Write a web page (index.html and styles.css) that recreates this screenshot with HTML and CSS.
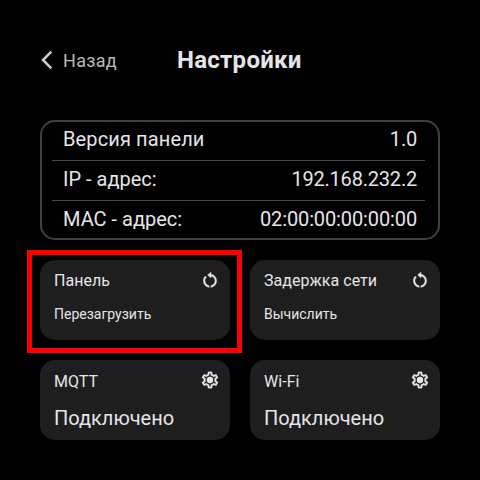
FILE: index.html
```html
<!DOCTYPE html>
<html lang="ru">
<head>
<meta charset="utf-8">
<title>Настройки</title>
<link rel="stylesheet" href="styles.css">
</head>
<body>
<svg class="defs" width="0" height="0" aria-hidden="true">
  <symbol id="restart" viewBox="0 0 24 24"><path d="M13.300 5V2.300L9 6l4.300 3.700V7.100C16 7.700 18 10.100 18 13c0 2.970-2.170 5.430-5 5.910v2.020c3.950-.49 7-3.850 7-7.930 0-4-2.900-7.400-6.700-8zM6 13c0-1.650.67-3.150 1.760-4.240L6.340 7.340C4.900 8.790 4 10.790 4 13c0 4.080 3.050 7.440 7 7.930v-2.020c-2.830-.48-5-2.940-5-5.910z"/></symbol>
  <symbol id="gear" viewBox="0 0 24 24"><path d="M19.43 12.98c.04-.32.07-.64.07-.98 0-.34-.03-.66-.07-.98l2.11-1.65c.19-.15.24-.42.12-.64l-2-3.46c-.09-.16-.26-.25-.44-.25-.06 0-.12.01-.17.03l-2.49 1c-.52-.4-1.08-.73-1.69-.98l-.38-2.65C14.46 2.18 14.25 2 14 2h-4c-.25 0-.46.18-.49.42l-.38 2.65c-.61.25-1.17.59-1.69.98l-2.49-1c-.06-.02-.12-.03-.18-.03-.17 0-.34.09-.43.25l-2 3.46c-.13.22-.07.49.12.64l2.11 1.65c-.04.32-.07.65-.07.98 0 .33.03.66.07.98l-2.11 1.65c-.19.15-.24.42-.12.64l2 3.46c.09.16.26.25.44.25.06 0 .12-.01.17-.03l2.49-1c.52.4 1.08.73 1.69.98l.38 2.65c.03.24.24.42.49.42h4c.25 0 .46-.18.49-.42l.38-2.65c.61-.25 1.17-.59 1.69-.98l2.49 1c.06.02.12.03.18.03.17 0 .34-.09.43-.25l2-3.46c.12-.22.07-.49-.12-.64l-2.11-1.65zm-1.98-1.71c.04.31.05.52.05.73 0 .21-.02.43-.05.73l-.14 1.13.89.7 1.08.84-.7 1.21-1.27-.51-1.04-.42-.9.68c-.43.32-.84.56-1.25.73l-1.06.43-.16 1.13-.2 1.35h-1.4l-.19-1.35-.16-1.13-1.06-.43c-.43-.18-.83-.41-1.23-.71l-.91-.7-1.06.43-1.27.51-.7-1.21 1.08-.84.89-.7-.14-1.13c-.03-.31-.05-.54-.05-.74s.02-.43.05-.73l.14-1.13-.89-.7-1.08-.84.7-1.21 1.27.51 1.04.42.9-.68c.43-.32.84-.56 1.25-.73l1.06-.43.16-1.13.2-1.35h1.39l.19 1.35.16 1.13 1.06.43c.43.18.83.41 1.23.71l.91.7 1.06-.43 1.27-.51.7 1.21-1.07.85-.89.7.14 1.13z"/><circle cx="12" cy="12" r="3.8"/></symbol>
</svg>
<main class="screen">
  <header class="header">
    <button class="back" type="button">
      <svg class="chevron" viewBox="0 0 12 20"><path d="M11.300 1.600 3 10l8.300 8.400"/></svg>
      <span>Назад</span>
    </button>
    <h1 class="title">Настройки</h1>
  </header>
  <dl class="info">
    <div class="row"><dt class="wide">Версия панели</dt><dd>1.0</dd></div>
    <div class="row"><dt>IP - адрес:</dt><dd>192.168.232.2</dd></div>
    <div class="row"><dt>MAC - адрес:</dt><dd class="mac">02:00:00:00:00:00</dd></div>
  </dl>
  <section class="cards">
    <article class="card selected">
      <div class="head"><h2>Панель</h2><svg class="icon restart"><use href="#restart"/></svg></div>
      <p class="action">Перезагрузить</p>
    </article>
    <article class="card">
      <div class="head"><h2>Задержка сети</h2><svg class="icon restart"><use href="#restart"/></svg></div>
      <p class="action">Вычислить</p>
    </article>
    <article class="card">
      <div class="head low"><h2>MQTT</h2><svg class="icon"><use href="#gear"/></svg></div>
      <p class="status">Подключено</p>
    </article>
    <article class="card">
      <div class="head low"><h2>Wi-Fi</h2><svg class="icon"><use href="#gear"/></svg></div>
      <p class="status">Подключено</p>
    </article>
  </section>
</main>
</body>
</html>
```
FILE: styles.css
```css
* { box-sizing: border-box; margin: 0; padding: 0; }
body { background: #000; color: #e6e5ea; font-family: Roboto, "Liberation Sans", sans-serif; }
.defs { display: block; }
.screen { width: 480px; height: 480px; padding: 40px; overflow: hidden; }
.header { display: flex; align-items: center; height: 40px; margin-bottom: 40px; }
.back { display: flex; align-items: center; gap: 11px; width: 137px; border: 0; background: none; color: #b9b9bd; font: 400 18px/24px Roboto, sans-serif; letter-spacing: .3px; white-space: nowrap; }
.back span { padding-top: 2px; }
.chevron { width: 12px; height: 20px; overflow: visible; fill: none; stroke: #c9c9cc; stroke-width: 2.6; }
.title { font-size: 24px; font-weight: 700; line-height: 40px; letter-spacing: .27px; }
.info { height: 120px; padding: 0 13px 0 10px; border: 2px solid #414141; border-radius: 15px; font-size: 20px; }
.row { display: flex; justify-content: space-between; height: 40px; padding: 0 8px 0 11px; line-height: 36px; }
.row:first-child { height: 38px; line-height: 35px; }
.row + .row { border-top: 1px solid #4a4a4a; }
.wide { letter-spacing: .12px; }
.row dd { letter-spacing: -.2px; }
.row .mac { letter-spacing: -.12px; }
.cards { display: grid; grid-template-columns: 190px 190px; grid-auto-rows: 80px; gap: 20px; margin-top: 20px; }
.card { position: relative; padding: 10px 10px 0 14px; border-radius: 15px; background: #1e1e1e; }
.selected::after { content: ""; position: absolute; inset: -10px -12px -13px -13px; border: 5px solid #f00; }
.head { display: flex; justify-content: space-between; height: 20px; }
.head h2 { font-size: 16px; font-weight: 400; line-height: 21px; letter-spacing: .05px; white-space: nowrap; }
.low h2 { line-height: 23px; }
.icon { width: 20px; height: 20px; fill: #e6e5ea; stroke: #e6e5ea; stroke-width: .25; }
.restart { stroke-width: .4; }
.action { margin-top: 14px; font-size: 14px; line-height: 20px; }
.status { margin-top: 16px; font-size: 20px; line-height: 24px; }
```
